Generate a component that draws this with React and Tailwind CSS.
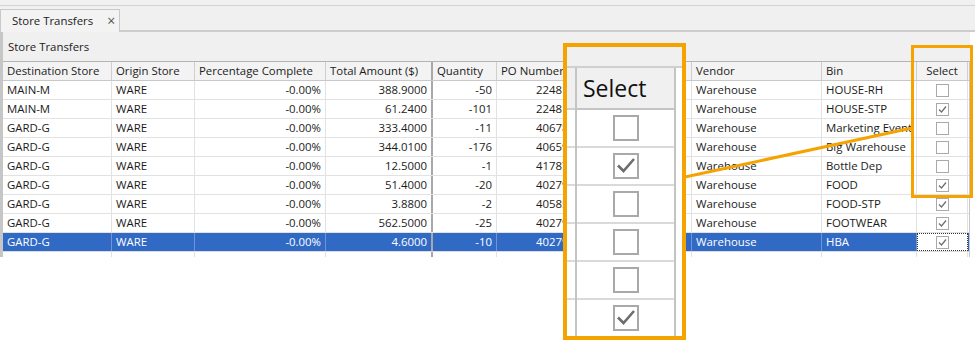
import React from 'react';

const columns = [
  { key: 'dest', label: 'Destination Store', w: 109 },
  { key: 'origin', label: 'Origin Store', w: 83 },
  { key: 'pct', label: 'Percentage Complete', w: 131, right: true },
  { key: 'amt', label: 'Total Amount ($)', w: 107, right: true, heavy: true },
  { key: 'qty', label: 'Quantity', w: 64, right: true },
  { key: 'po', label: 'PO Number', w: 83, right: true },
  { key: 'date', label: 'Date', w: 112 },
  { key: 'vendor', label: 'Vendor', w: 130 },
  { key: 'bin', label: 'Bin', w: 95 },
  { key: 'select', label: 'Select', w: 51, center: true },
];

const rows = [
  { dest: 'MAIN-M', origin: 'WARE', pct: '-0.00%', amt: '388.9000', qty: '-50', po: '224817', date: '', vendor: 'Warehouse', bin: 'HOUSE-RH', select: false },
  { dest: 'MAIN-M', origin: 'WARE', pct: '-0.00%', amt: '61.2400', qty: '-101', po: '224818', date: '', vendor: 'Warehouse', bin: 'HOUSE-STP', select: true },
  { dest: 'GARD-G', origin: 'WARE', pct: '-0.00%', amt: '333.4000', qty: '-11', po: '406782', date: '', vendor: 'Warehouse', bin: 'Marketing Event', select: false },
  { dest: 'GARD-G', origin: 'WARE', pct: '-0.00%', amt: '344.0100', qty: '-176', po: '406591', date: '', vendor: 'Warehouse', bin: 'Big Warehouse', select: false },
  { dest: 'GARD-G', origin: 'WARE', pct: '-0.00%', amt: '12.5000', qty: '-1', po: '417871', date: '', vendor: 'Warehouse', bin: 'Bottle Dep', select: false },
  { dest: 'GARD-G', origin: 'WARE', pct: '-0.00%', amt: '51.4000', qty: '-20', po: '402791', date: '', vendor: 'Warehouse', bin: 'FOOD', select: true },
  { dest: 'GARD-G', origin: 'WARE', pct: '-0.00%', amt: '3.8800', qty: '-2', po: '405853', date: '', vendor: 'Warehouse', bin: 'FOOD-STP', select: true },
  { dest: 'GARD-G', origin: 'WARE', pct: '-0.00%', amt: '562.5000', qty: '-25', po: '402792', date: '', vendor: 'Warehouse', bin: 'FOOTWEAR', select: true },
  { dest: 'GARD-G', origin: 'WARE', pct: '-0.00%', amt: '4.6000', qty: '-10', po: '402793', date: '', vendor: 'Warehouse', bin: 'HBA', select: true, selected: true },
];

function SmallCheck({ checked }) {
  return (
    <div className="w-[13px] h-[13px] border border-[#a9a9a9] bg-white flex items-center justify-center">
      {checked && (
        <svg width="11" height="11" viewBox="0 0 11 11">
          <path d="M2 5.5 L4.5 8 L9 2.5" fill="none" stroke="#707070" strokeWidth="1.3" />
        </svg>
      )}
    </div>
  );
}

function BigCheck({ checked }) {
  return (
    <div className="w-[26px] h-[26px] border-2 border-[#a9a9a9] bg-white flex items-center justify-center">
      {checked && (
        <svg width="22" height="22" viewBox="0 0 22 22">
          <path d="M3 10.5 L8.5 16 L19 4" fill="none" stroke="#6e6e6e" strokeWidth="2.6" />
        </svg>
      )}
    </div>
  );
}

function Cell({ col, children, selected, header }) {
  const border = col.heavy
    ? 'border-r-2 border-r-[#a8a8a8]'
    : header
    ? 'border-r border-r-[#cfcfcf]'
    : selected
    ? 'border-r border-r-[#6f93d6]'
    : 'border-r border-r-[#e2e2e2]';
  const align = col.center ? 'justify-center' : col.right ? 'justify-end' : 'justify-start';
  return (
    <div
      style={{ width: col.w }}
      className={`shrink-0 h-full flex items-center px-[4px] overflow-hidden whitespace-nowrap ${align} ${border}`}
    >
      {children}
    </div>
  );
}

export default function App() {
  return (
    <div
      className="relative w-[975px] h-[340px] overflow-hidden bg-white text-[11.4px] text-[#1b1b1b]"
      style={{ fontFamily: '"Open Sans", "Noto Sans", sans-serif' }}
    >
      {/* window chrome strip */}
      <div className="h-[6px] bg-[#f0f0f0] border-b border-[#d4d4d4]" />

      {/* tab strip */}
      <div className="h-[26px] bg-[#f0f0f0] flex items-end">
        <div className="w-[120px] h-[23px] border border-b-0 border-[#c9c9c9] bg-[#f3f3f3] flex items-center pl-[11px] gap-[14px] whitespace-nowrap">
          <span>Store Transfers</span>
          <span className="text-[14px] text-[#555] leading-none">×</span>
        </div>
        <div className="flex-1 h-[2px] bg-[#cdcdcd]" />
      </div>

      {/* panel */}
      <div className="border-l-[3px] border-[#c6c6c6] mr-[5px]">
        <div className="h-[29px] bg-[#f0f0f0] flex items-center pl-[5px]">Store Transfers</div>

        <div className="border-r border-[#c6c6c6]">
          {/* header */}
          <div className="h-[20px] flex bg-[#f3f3f3] border-t border-t-[#b4b4b4] border-b border-b-[#c8c8c8]">
            {columns.map((c) => (
              <Cell key={c.key} col={c} header>
                <span className={c.center ? '' : 'w-full text-left'}>{c.label}</span>
              </Cell>
            ))}
          </div>

          {/* rows */}
          {rows.map((r, i) => (
            <div
              key={i}
              className={`h-[19px] flex border-b ${
                r.selected ? 'bg-[#316ac5] text-white border-b-[#dcdcdc]' : 'bg-white border-b-[#e2e2e2]'
              }`}
            >
              {columns.map((c) =>
                c.key === 'select' ? (
                  <div
                    key={c.key}
                    style={{ width: c.w }}
                    className={`shrink-0 h-full flex items-center justify-center bg-white ${
                      r.selected ? 'border border-dotted border-[#333]' : 'border-r border-r-[#e2e2e2]'
                    }`}
                  >
                    <SmallCheck checked={r.select} />
                  </div>
                ) : (
                  <Cell key={c.key} col={c} selected={r.selected}>
                    {r[c.key]}
                  </Cell>
                )
              )}
            </div>
          ))}

          {/* partially visible next row */}
          <div className="h-[5px] flex overflow-hidden">
            {columns.map((c) => (
              <Cell key={c.key} col={c} />
            ))}
          </div>
        </div>
      </div>

      {/* callout: magnified Select column */}
      <div className="absolute left-[563px] top-[43px] w-[123px] h-[297px] border-4 border-[#f5a300] bg-white overflow-hidden flex flex-col">
        <div className="h-[21px] bg-[#f0f0f0] border-b-2 border-[#cfcfcf] shrink-0" />
        <div className="flex flex-1">
          <div className="w-[8px] shrink-0 flex flex-col">
            <div className="h-[42px] bg-[#f0f0f0] border-b-2 border-[#cfcfcf]" />
            {[0, 1, 2, 3, 4, 5].map((i) => (
              <div key={i} className="h-[38px] border-b-2 border-[#dadada]" />
            ))}
          </div>
          <div className="w-[101px] shrink-0 flex flex-col border-l-2 border-r-2 border-[#c4c4c4]">
            <div className="h-[42px] bg-[#f0f0f0] border-b-2 border-[#c4c4c4] flex items-center pl-[6px] text-[23px] font-medium text-[#111]">
              Select
            </div>
            {rows.slice(0, 6).map((r, i) => (
              <div key={i} className="h-[38px] border-b-2 border-[#dadada] flex items-center justify-center">
                <BigCheck checked={r.select} />
              </div>
            ))}
          </div>
          <div className="flex-1" />
        </div>
      </div>

      {/* callout: original Select column */}
      <div className="absolute left-[911px] top-[45px] w-[62px] h-[153px] border-[3px] border-[#f5a300]" />

      {/* connector */}
      <svg className="absolute left-0 top-0 pointer-events-none" width="975" height="340">
        <line x1="685" y1="177" x2="912" y2="128" stroke="#f5a300" strokeWidth="3" />
      </svg>
    </div>
  );
}
